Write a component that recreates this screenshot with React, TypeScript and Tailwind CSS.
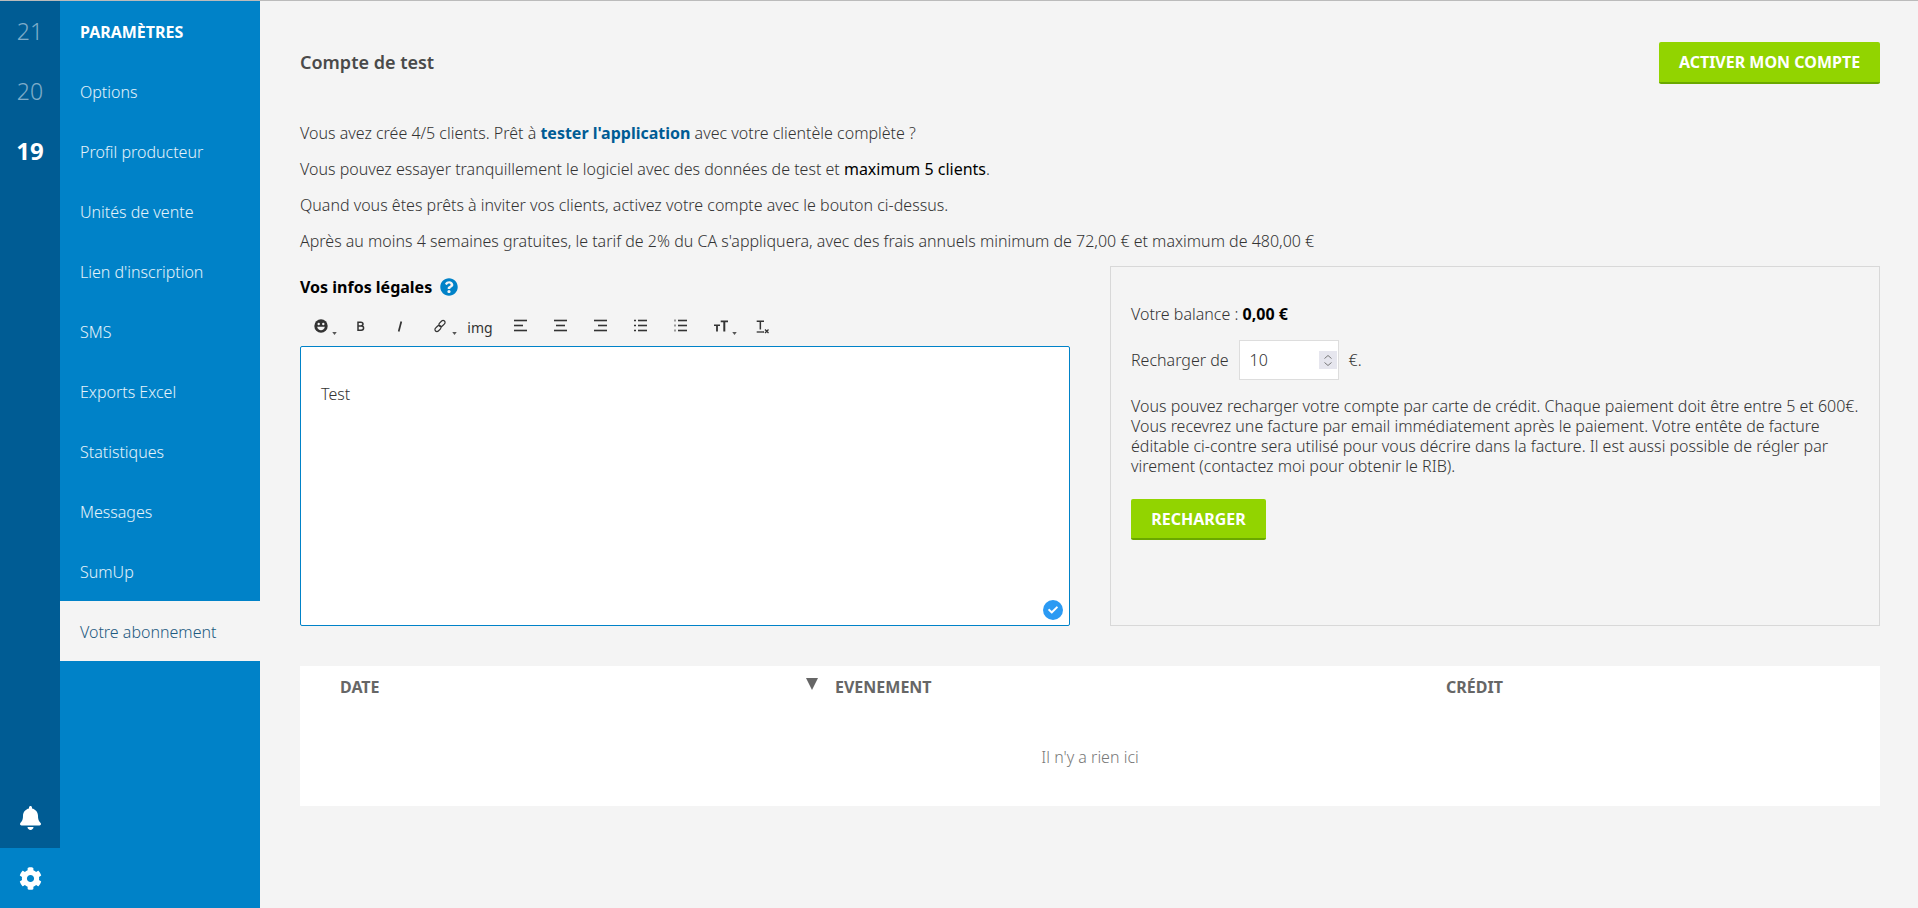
// App.tsx - page "Votre abonnement"
import { FaBell, FaCog, FaQuestionCircle, FaCheck } from "react-icons/fa";

const navItems = [
  "Options",
  "Profil producteur",
  "Unités de vente",
  "Lien d'inscription",
  "SMS",
  "Exports Excel",
  "Statistiques",
  "Messages",
  "SumUp",
];

const Caret = () => (
  <svg viewBox="0 0 6 4" className="absolute left-[32px] top-[20px] w-[5px] h-[3px]" aria-hidden="true">
    <path d="M0 0h6L3 4z" fill="#555" />
  </svg>
);

const ToolIcon = ({ children, caret }: { children: React.ReactNode; caret?: boolean }) => (
  <div className="relative w-10 h-7 flex items-center justify-center">
    <svg viewBox="0 0 14 14" className="w-[14px] h-[14px] overflow-visible" aria-hidden="true">
      {children}
    </svg>
    {caret && <Caret />}
  </div>
);

const Line = ({ x1, x2, y }: { x1: number; x2: number; y: number }) => (
  <path d={`M${x1} ${y}H${x2}`} stroke="#333" strokeWidth="1.6" fill="none" />
);

const Toolbar = () => (
  <div className="flex items-center h-7 mt-[14px]">
    {/* emoji */}
    <ToolIcon caret>
      <g transform="translate(1 0)">
        <circle cx="7" cy="7" r="6.7" fill="#333" />
        <circle cx="4.7" cy="5" r="1.2" fill="#f4f4f4" />
        <circle cx="9.3" cy="5" r="1.2" fill="#f4f4f4" />
        <path d="M3.2 7.800h7.600c-.3 2.200-1.900 3.500-3.800 3.500S3.500 10 3.200 7.800z" fill="#f4f4f4" />
      </g>
    </ToolIcon>
    {/* bold */}
    <ToolIcon>
      <path
        d="M5 3.200h2.800c1.400 0 2.200.7 2.200 1.900S9.200 7 7.800 7H5zM5 7h3.200c1.500 0 2.400.8 2.400 2.100s-.9 2.100-2.400 2.100H5z"
        stroke="#333"
        strokeWidth="1.500"
        fill="none"
      />
    </ToolIcon>
    {/* italic */}
    <ToolIcon>
      <path d="M8.300 2.500 5.700 12.500" stroke="#333" strokeWidth="1.700" fill="none" />
    </ToolIcon>
    {/* link */}
    <ToolIcon caret>
      <g stroke="#333" strokeWidth="1.200" fill="none">
        <rect x="1.500" y="7.500" width="7" height="4" rx="2" transform="rotate(-45 5 9.500)" />
        <rect x="5.500" y="2.500" width="7" height="4" rx="2" transform="rotate(-45 9 4.500)" />
      </g>
    </ToolIcon>
    <div className="w-10 h-7 flex items-center justify-center text-[14px] font-normal text-[#333] pt-[2px]">img</div>
    {/* align left */}
    <ToolIcon>
      <Line x1={1} x2={14} y={1.500} />
      <Line x1={1} x2={10} y={6.500} />
      <Line x1={1} x2={14} y={11.500} />
    </ToolIcon>
    {/* align center */}
    <ToolIcon>
      <Line x1={1} x2={14} y={1.500} />
      <Line x1={3} x2={12} y={6.500} />
      <Line x1={1} x2={14} y={11.500} />
    </ToolIcon>
    {/* align right */}
    <ToolIcon>
      <Line x1={1} x2={14} y={1.500} />
      <Line x1={5} x2={14} y={6.500} />
      <Line x1={1} x2={14} y={11.500} />
    </ToolIcon>
    {/* bullet list */}
    <ToolIcon>
      <Line x1={5} x2={14} y={1.500} />
      <Line x1={5} x2={14} y={6.500} />
      <Line x1={5} x2={14} y={11.500} />
      <Line x1={1} x2={3} y={1.500} />
      <Line x1={1} x2={3} y={6.500} />
      <Line x1={1} x2={3} y={11.500} />
    </ToolIcon>
    {/* ordered list */}
    <ToolIcon>
      <Line x1={5} x2={14} y={1.500} />
      <Line x1={5} x2={14} y={6.500} />
      <Line x1={5} x2={14} y={11.500} />
      <path d="M1 .5h2v2H1zM1 5.500h2v2H1zM1 10.500h2v2H1z" fill="#999" />
    </ToolIcon>
    {/* text size */}
    <ToolIcon caret>
      <path d="M7.700 1.500H15v1.800h-2.700v9.200h-2V3.300H7.700z M1 5.500h6v1.500H4.900v5.500H3.100V7H1z" fill="#333" />
    </ToolIcon>
    {/* clear format */}
    <ToolIcon>
      <path d="M3.700 1.500H11v1.500H8.100v7.500H6.600V3H3.700z" fill="#333" />
      <path d="M3.700 13h7.300" stroke="#333" strokeWidth="1.300" fill="none" />
      <path d="M12 10.500l3.500 3.500M15.500 10.500 12 14" stroke="#333" strokeWidth="1.300" fill="none" />
    </ToolIcon>
  </div>
);

const GreenButton = ({ label, className }: { label: string; className: string }) => (
  <button
    type="button"
    className={`bg-[#92d400] border-b-2 border-[#6aa800] rounded-[2px] text-white font-bold text-[16px] ${className}`}
  >
    {label}
  </button>
);

export default function App() {
  return (
    <div className="flex flex-col w-full h-[908px] overflow-hidden bg-[#f4f4f4] text-[#333] font-light font-['Noto_Sans',sans-serif]">
      <div className="h-px bg-[#bbbbbb] shrink-0" />
      <div className="flex flex-1 min-h-0">
        {/* year rail */}
        <aside className="w-[60px] shrink-0 flex flex-col bg-[#005c94]">
          <div className="h-[60px] flex items-center justify-center text-[23px] font-light text-white/50">21</div>
          <div className="h-[60px] flex items-center justify-center text-[23px] font-light text-white/50">20</div>
          <div className="h-[60px] flex items-center justify-center text-[24px] font-bold text-white">19</div>
          <div className="flex-1 flex items-end justify-center pb-[18px]">
            <FaBell className="text-white w-[21px] h-[24px]" />
          </div>
          <div className="h-[60px] flex items-center justify-center bg-[#0082c8]">
            <FaCog className="text-white w-[23px] h-[23px]" />
          </div>
        </aside>

        {/* settings nav */}
        <nav className="w-[200px] shrink-0 bg-[#0082c8] text-[16px] font-light text-white">
          <div className="h-[60px] flex items-center pl-5 pt-[2px] font-bold">PARAMÈTRES</div>
          {navItems.map((item) => (
            <div key={item} className="h-[60px] flex items-center pl-5 pt-[2px] text-white/90">
              {item}
            </div>
          ))}
          <div className="h-[60px] flex items-center pl-5 pt-[2px] bg-[#f4f4f4] text-[#1d5a80]">Votre abonnement</div>
        </nav>

        {/* content */}
        <main className="flex-1 min-w-0 pl-10 pr-[38px] text-[16px]">
          <div className="flex items-center justify-between pt-[41px]">
            <h1 className="text-[18px] font-semibold text-[#4a4a4a] pb-[2px]">Compte de test</h1>
            <GreenButton label="ACTIVER MON COMPTE" className="w-[221px] h-[42px]" />
          </div>

          <div className="mt-[39px] flex flex-col gap-[16px] leading-[20px]">
            <p>
              Vous avez crée 4/5 clients. Prêt à <span className="font-bold text-[#005c94]">tester l'application</span> avec votre clientèle complète ?
            </p>
            <p>
              Vous pouvez essayer tranquillement le logiciel avec des données de test et <span className="font-normal text-black">maximum 5 clients</span>.
            </p>
            <p>Quand vous êtes prêts à inviter vos clients, activez votre compte avec le bouton ci-dessus.</p>
            <p>Après au moins 4 semaines gratuites, le tarif de 2% du CA s'appliquera, avec des frais annuels minimum de 72,00 € et maximum de 480,00 €</p>
          </div>

          <div className="mt-[15px] flex gap-10 h-[360px]">
            <section className="w-[770px] shrink-0 flex flex-col">
              <div className="flex items-center gap-2 pt-[10px] h-[32px]">
                <span className="font-bold text-black">Vos infos légales</span>
                <FaQuestionCircle className="text-[#0082c8] w-[18px] h-[18px]" />
              </div>
              <Toolbar />
              <div className="relative mt-[6px] flex-1 bg-white border border-[#0082c8] rounded-[2px] px-5 pt-[35px]">
                Test
                <div className="absolute right-[6px] bottom-[5px] w-5 h-5 rounded-full bg-[#2b9af3] flex items-center justify-center">
                  <FaCheck className="text-white w-[10px] h-[10px]" />
                </div>
              </div>
            </section>

            <section className="flex-1 min-w-0 border border-[#d8d8d8] px-5 pt-[37px] text-[#333]">
              <p className="leading-[20px]">
                Votre balance : <span className="font-bold text-black">0,00 €</span>
              </p>
              <div className="flex items-center mt-[16px]">
                <span>Recharger de</span>
                <div className="relative ml-[10px] w-[100px] h-10 bg-white border border-[#dddddd] flex items-center pl-[10px]">
                  10
                  <div className="absolute right-[1px] top-[10px] w-[18px] h-[18px] bg-[#e6e6ee] flex flex-col items-center justify-center gap-[3px]">
                    <svg viewBox="0 0 8 4" className="w-2 h-1" aria-hidden="true">
                      <path d="M.5 3.500 4 .5l3.500 3" stroke="#777" fill="none" />
                    </svg>
                    <svg viewBox="0 0 8 4" className="w-2 h-1" aria-hidden="true">
                      <path d="M.5 .5 4 3.500 7.500 .5" stroke="#777" fill="none" />
                    </svg>
                  </div>
                </div>
                <span className="ml-[10px]">€.</span>
              </div>
              <p className="mt-[16px] leading-[20px]">
                Vous pouvez recharger votre compte par carte de crédit. Chaque paiement doit être entre 5 et 600€. Vous recevrez une facture par email immédiatement après le paiement. Votre entête de facture éditable ci-contre sera utilisé pour vous décrire dans la facture. Il est aussi possible de régler par virement (contactez moi pour obtenir le RIB).
              </p>
              <GreenButton label="RECHARGER" className="w-[135px] h-[41px] mt-[23px] block" />
            </section>
          </div>

          <div className="mt-10 h-[140px] bg-white">
            <div className="grid grid-cols-[495px_611px_1fr] px-10 h-[42px] items-center font-bold text-[#666] text-[16px]">
              <div className="relative">
                DATE
                <svg viewBox="0 0 12 12" className="absolute left-[466px] top-[3px] w-3 h-3" aria-hidden="true">
                  <path d="M0 0h12L6 12z" fill="#666" />
                </svg>
              </div>
              <div>EVENEMENT</div>
              <div>CRÉDIT</div>
            </div>
            <div className="mt-[39px] text-center text-[#777] leading-[20px]">Il n'y a rien ici</div>
          </div>
        </main>
      </div>
    </div>
  );
}
